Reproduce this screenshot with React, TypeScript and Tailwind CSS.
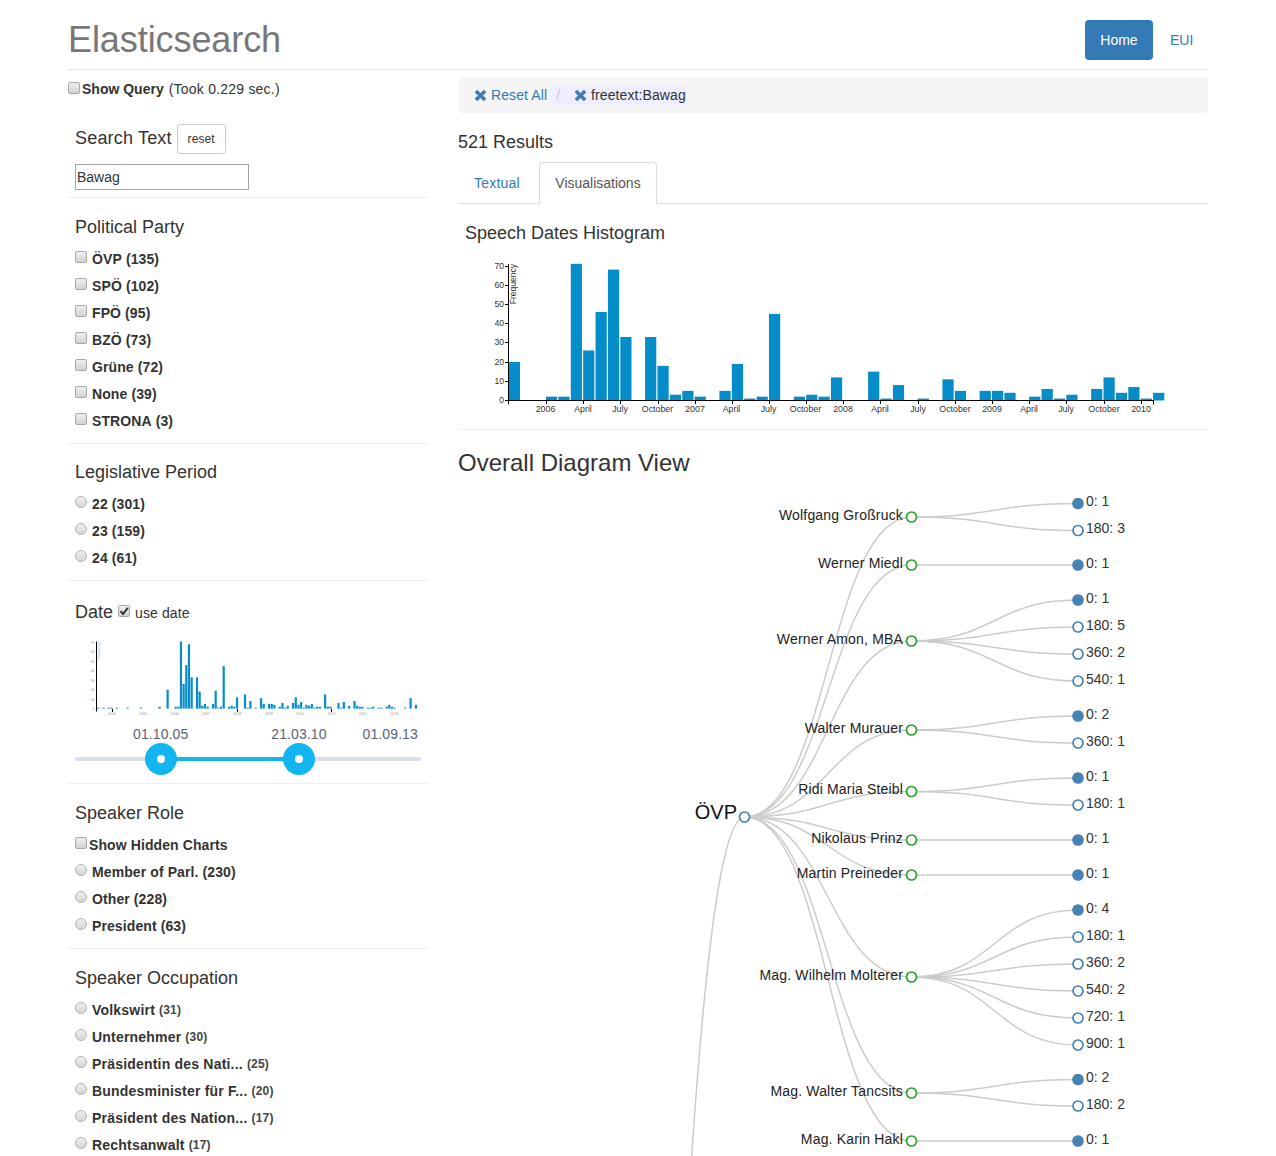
const mainBars = [20, 0, 0, 2, 2, 71, 26, 46, 68, 33, 0, 33, 18, 3, 5, 2, 0, 5, 19, 1, 2, 45, 0, 2, 3, 2, 12, 0, 0, 15, 1, 8, 0, 1, 0, 11, 5, 0, 5, 5, 4, 0, 2, 6, 1, 3, 0, 6, 12, 4, 7, 1, 4]
const mainTicks = [
  ['2006', 545.5], ['April', 583], ['July', 620], ['October', 657.5], ['2007', 695], ['April', 731.5], ['July', 768.5], ['October', 805.5], ['2008', 843],
  ['April', 880], ['July', 918], ['October', 955], ['2009', 992], ['April', 1029], ['July', 1066], ['October', 1104], ['2010', 1141],
] as const

// monthly bins of the small chart; the middle part is the same data as the big one
const smallBars: Record<number, number> = { 0: 1, 2: 1, 4: 1, 5: 1, 7: 1, 11: 1, 16: 1, 23: 2, 79: 3, 80: 5, 81: 1, 82: 2, 83: 2, 85: 15, 86: 2, 87: 2, 90: 6, 91: 1, 92: 7, 94: 3, 96: 8, 97: 3, 98: 2, 99: 2, 101: 1, 102: 1, 103: 2, 105: 1, 106: 1, 108: 2, 109: 4, 110: 2, 111: 1, 115: 1, 117: 11, 119: 4 }
mainBars.forEach((v, i) => { if (v) smallBars[26 + i] = v })

const tree = [
  { name: 'Wolfgang Großruck', y: 517, leaves: [['0: 1', 503.5], ['180: 3', 530.5]] },
  { name: 'Werner Miedl', y: 565, leaves: [['0: 1', 565]] },
  { name: 'Werner Amon, MBA', y: 641, leaves: [['0: 1', 600], ['180: 5', 627], ['360: 2', 654], ['540: 1', 681]] },
  { name: 'Walter Murauer', y: 730, leaves: [['0: 2', 716], ['360: 1', 743]] },
  { name: 'Ridi Maria Steibl', y: 791.5, leaves: [['0: 1', 778], ['180: 1', 805]] },
  { name: 'Nikolaus Prinz', y: 840, leaves: [['0: 1', 840]] },
  { name: 'Martin Preineder', y: 875, leaves: [['0: 1', 875]] },
  { name: 'Mag. Wilhelm Molterer', y: 977, leaves: [['0: 4', 910], ['180: 1', 937], ['360: 2', 964], ['540: 2', 991], ['720: 1', 1018], ['900: 1', 1045]] },
  { name: 'Mag. Walter Tancsits', y: 1093, leaves: [['0: 2', 1079.5], ['180: 2', 1106]] },
  { name: 'Mag. Karin Hakl', y: 1141, leaves: [['0: 1', 1141]] },
] as const

const ROOT_X = 744.5
const ROOT_Y = 817
const SPEAKER_X = 911.5
const LEAF_X = 1078

function diagonal(x0: number, y0: number, x1: number, y1: number) {
  const m = (x0 + x1) / 2
  return `M${x0},${y0}C${m},${y0} ${m},${y1} ${x1},${y1}`
}

function Box({ radio = false }: { radio?: boolean }) {
  return (
    <input
      type={radio ? 'radio' : 'checkbox'}
      className={radio
        ? 'appearance-none w-3 h-3 shrink-0 rounded-full border border-[#b4b4b4] bg-linear-to-b from-[#f0f0f0] to-[#d4d4d4] -mt-[3px]'
        : 'appearance-none w-3 h-3 shrink-0 rounded-[2px] border border-[#a8a8a8] bg-linear-to-b from-[#efefef] to-[#d2d2d2] -mt-[3px]'}
    />
  )
}

function Row({ label, count, radio, small }: { label: string; count: string; radio?: boolean; small?: boolean }) {
  return (
    <label className={small ? 'flex items-center h-[27px] font-bold tracking-[0.2px]' : 'flex items-center h-[27px] font-bold tracking-[0.1px]'}>
      <Box radio={radio} />
      <span className="ml-[5px]">{label}</span>
      <span className={small ? 'ml-1 text-xs text-[#444]' : 'ml-1'}>{count}</span>
    </label>
  )
}

function Facet({ title, children, className }: { title: string; children: React.ReactNode; className: string }) {
  return (
    <div className={`border-b border-[#eee] px-[7px] ${className}`}>
      <h4 className="text-lg leading-5 h-5 mt-[19px] mb-2 font-normal">{title}</h4>
      {children}
    </div>
  )
}

function RemoveIcon() {
  return (
    <svg width="13" height="13" viewBox="0 0 13 13" className="shrink-0 text-[#3d7fb9]">
      <path d="M1.9 1.9L11.1 11.1M11.1 1.9L1.9 11.1" stroke="currentColor" strokeWidth="3.6" />
    </svg>
  )
}

function SpeechHistogram() {
  const step = 12.39
  return (
    <svg viewBox="458 243 750 177" width="750" height="177" className="block">
      {mainBars.map((v, i) => v > 0 && (
        <rect key={i} x={508.8 + i * step} y={400.5 - v * 1.925} width={11.2} height={v * 1.925} fill="#058dc9" />
      ))}
      <path d="M508.5,264V400.5H1153.5" fill="none" stroke="#000" strokeWidth="1" />
      {[0, 10, 20, 30, 40, 50, 60, 70].map((v) => {
        const y = Math.round(400 - v * 1.92) + 0.5
        return (
          <g key={v}>
            <path d={`M505,${y}H508`} stroke="#000" />
            <text x={504} y={403 - v * 1.92} textAnchor="end" fontSize="8.6" fill="#333">{v}</text>
          </g>
        )
      })}
      <path d={`M508.5,400V404.5${mainTicks.map((t) => `M${Math.round(t[1]) + 0.5},400V404`).join('')}M1153.5,400V404.5`} stroke="#000" />
      {mainTicks.map(([label, x], i) => (
        <text key={i} x={x} y={411.5} textAnchor="middle" fontSize="8.8" fill="#333">{label}</text>
      ))}
      <text transform="translate(516,264) rotate(-90)" textAnchor="end" fontSize="8.5" fill="#333">Frequency</text>
    </svg>
  )
}

function DateHistogram() {
  const years = [['2004', 112], ['2005', 143.3], ['2006', 175], ['2007', 206], ['2008', 237.3], ['2009', 269], ['2010', 300], ['2011', 331.7], ['2012', 362.7], ['2013', 394]] as const
  return (
    <svg viewBox="68 635 360 85" width="360" height="85" className="block -mx-[7px]">
      {Object.entries(smallBars).map(([i, v]) => (
        <rect key={i} x={97.1 + Number(i) * 2.67} y={708.6 - v * 0.945} width={2.2} height={v * 0.945} fill="#058dc9" />
      ))}
      <path d="M96.5,641.5V711.5" stroke="#000" />
      <path d="M112.5,709V712M237.5,709V712M331.5,709V712" stroke="#000" />
      {[0, 10, 20, 30, 40, 50, 60, 70].map((v) => (
        <text key={v} x={94.5} y={710 - v * 0.945} textAnchor="end" fontSize="3.4" fill="#999">{v}</text>
      ))}
      {years.map(([label, x]) => (
        <text key={label} x={x} y={714.5} textAnchor="middle" fontSize="3.6" fill="#999">{label}</text>
      ))}
      <text transform="translate(100,642) rotate(-90)" textAnchor="end" fontSize="3.6" fill="#999">Frequency</text>
    </svg>
  )
}

function Handle({ className }: { className: string }) {
  return (
    <div className={`absolute -top-[14px] w-8 h-8 rounded-full bg-[#12b5ef] flex items-center justify-center ${className}`}>
      <div className="w-2 h-2 rounded-full bg-white" />
    </div>
  )
}

function DiagramTree() {
  return (
    <svg viewBox="458 480 750 676" width="750" height="676" className="block">
      <g fill="none" stroke="#ccc" strokeWidth="1.5">
        <path d={diagonal(577, 2707, ROOT_X, ROOT_Y)} />
        {tree.map((s) => <path key={s.name} d={diagonal(ROOT_X, ROOT_Y, SPEAKER_X, s.y)} />)}
        {tree.map((s) => s.leaves.map(([label, y]) => <path key={s.name + label} d={diagonal(SPEAKER_X, s.y, LEAF_X, y)} />))}
      </g>
      <circle cx={ROOT_X} cy={ROOT_Y} r="5" fill="#fff" stroke="#4682b4" strokeWidth="1.7" />
      <text x={737} y={819} textAnchor="end" fontSize="20" fill="#111">ÖVP</text>
      {tree.map((s) => (
        <g key={s.name}>
          <circle cx={SPEAKER_X} cy={s.y} r="5" fill="#fff" stroke="#2ca02c" strokeWidth="1.7" />
          <text x={903} y={Math.floor(s.y) + 3} textAnchor="end" fontSize="14" letterSpacing="0.17" fill="#222">{s.name}</text>
          {s.leaves.map(([label, y]) => (
            <g key={label}>
              <circle cx={LEAF_X} cy={y} r="5" fill={label.startsWith('0:') ? '#4682b4' : '#fff'} stroke="#4682b4" strokeWidth="1.7" />
              <text x={1086} y={Math.floor(y) + 3} fontSize="14" fill="#333">{label}</text>
            </g>
          ))}
        </g>
      ))}
    </svg>
  )
}

export default function App() {
  return (
    <div className="h-[1156px] overflow-hidden bg-white text-sm text-[#333] font-['Liberation_Sans',Arial,sans-serif]">
      <div className="ml-[68px] w-[1140px]">
        <header className="flex items-start justify-between h-[70px] border-b border-[#e5e5e5] pt-5">
          <h3 className="text-4xl leading-10 text-[#777] tracking-[-0.08px]">Elasticsearch</h3>
          <nav className="flex items-center">
            <a className="h-10 w-[68px] flex items-center justify-center rounded bg-[#337ab7] text-white">Home</a>
            <a className="h-10 w-[55px] pl-[17px] flex items-center text-[#337ab7]">EUI</a>
          </nav>
        </header>

        <div className="flex">
          <aside className="w-[360px] shrink-0">
            <div className="flex items-center h-5 mt-[9px]">
              <Box />
              <b className="ml-0.5">Show Query</b>
              <span className="ml-[5px] tracking-[0.22px]">(Took 0.229 sec.)</span>
            </div>

            <div className="border-b border-[#eee] px-[7px] pb-[7px]">
              <div className="flex items-center mt-[25px] h-[30px]">
                <h4 className="text-lg font-normal tracking-[0.18px] -mt-0.5">Search Text</h4>
                <button className="ml-[5px] w-[49px] h-[30px] rounded-[3px] border border-[#ccc] text-xs bg-white tracking-[0.1px]">reset</button>
              </div>
              <input defaultValue="Bawag" className="block mt-2.5 w-[174px] h-[26px] px-px border border-[#a5a5a5] text-sm" />
            </div>

            <Facet title="Political Party" className="pb-[9px]">
              {[['ÖVP', '(135)'], ['SPÖ', '(102)'], ['FPÖ', '(95)'], ['BZÖ', '(73)'], ['Grüne', '(72)'], ['None', '(39)'], ['STRONA', '(3)']].map(([l, c]) => (
                <Row key={l} label={l} count={c} />
              ))}
            </Facet>

            <Facet title="Legislative Period" className="pb-[9px] -mt-px">
              {[['22', '(301)'], ['23', '(159)'], ['24', '(61)']].map(([l, c]) => (
                <Row key={l} label={l} count={c} radio />
              ))}
            </Facet>

            <div className="border-b border-[#eee] px-[7px] pt-[21px] h-[203px]">
              <div className="flex items-center h-5">
                <h4 className="text-lg font-normal">Date</h4>
                <span className="ml-[5px] -mt-[3px] w-3 h-3 rounded-[2px] border border-[#a8a8a8] bg-linear-to-b from-[#efefef] to-[#d2d2d2] flex items-center justify-center">
                  <svg width="10" height="10" viewBox="0 0 10 10"><path d="M1.5 5.2L4 8L8.8 1.8" fill="none" stroke="#333" strokeWidth="2" /></svg>
                </span>
                <span className="ml-[5px] mt-px tracking-[0.1px]">use date</span>
              </div>
              <div className="mt-[13px]">
                <DateHistogram />
              </div>
              <div className="flex text-[#5c6277] h-5 mt-1 items-center tracking-[0.1px]">
                <span className="ml-[58px]">01.10.05</span>
                <span className="ml-[83px]">21.03.10</span>
                <span className="ml-9">01.09.13</span>
              </div>
              <div className="relative mt-[13px] h-1 w-[346px] rounded-full bg-[#d9dff0]">
                <div className="ml-[86px] w-[138px] h-1 bg-[#12b5ef]" />
                <Handle className="left-[70px]" />
                <Handle className="left-[208px]" />
              </div>
            </div>

            <Facet title="Speaker Role" className="pb-[9px]">
              <label className="flex items-center h-[27px] font-bold tracking-[0.1px]">
                <Box />
                <span className="ml-0.5">Show Hidden Charts</span>
              </label>
              {[['Member of Parl.', '(230)'], ['Other', '(228)'], ['President', '(63)']].map(([l, c]) => (
                <Row key={l} label={l} count={c} radio />
              ))}
            </Facet>

            <Facet title="Speaker Occupation" className="pb-2">
              {[['Volkswirt', '(31)'], ['Unternehmer', '(30)'], ['Präsidentin des Nati...', '(25)'], ['Bundesminister für F...', '(20)'], ['Präsident des Nation...', '(17)'], ['Rechtsanwalt', '(17)']].map(([l, c]) => (
                <Row key={l} label={l} count={c} radio small />
              ))}
            </Facet>
          </aside>

          <main className="ml-[30px] w-[750px]">
            <div className="flex items-center h-9 mt-[7px] rounded bg-[#f5f5f5] pl-4">
              <RemoveIcon />
              <a className="ml-[4px] text-[#337ab7] tracking-[0.1px]">Reset All</a>
              <div className="ml-1 h-5 w-[135px] bg-[#eeeeff] flex items-center">
                <span className="ml-[5px] text-[#ccc]">/</span>
                <span className="ml-[14px]"><RemoveIcon /></span>
                <span className="ml-1 tracking-[0.1px]">freetext:Bawag</span>
              </div>
            </div>

            <h4 className="text-lg leading-5 mt-[19px] font-normal">521 Results</h4>

            <div className="flex h-[42px] mt-2.5 border-b border-[#ddd]">
              <a className="h-[41px] w-[81px] pl-4 flex items-center text-[#337ab7] tracking-[0.2px]">Textual</a>
              <a className="h-[42px] w-[118px] flex items-center justify-center rounded-t border border-[#ddd] border-b-white bg-white text-[#555]">Visualisations</a>
            </div>

            <h4 className="text-lg leading-5 mt-[19px] ml-[7px] font-normal">Speech Dates Histogram</h4>
            <SpeechHistogram />

            <div className="border-t border-[#eee] mt-[9px]" />
            <h3 className="text-2xl leading-[26px] mt-5 font-normal">Overall Diagram View</h3>
            <div className="mt-[4px]">
              <DiagramTree />
            </div>
          </main>
        </div>
      </div>
    </div>
  )
}
